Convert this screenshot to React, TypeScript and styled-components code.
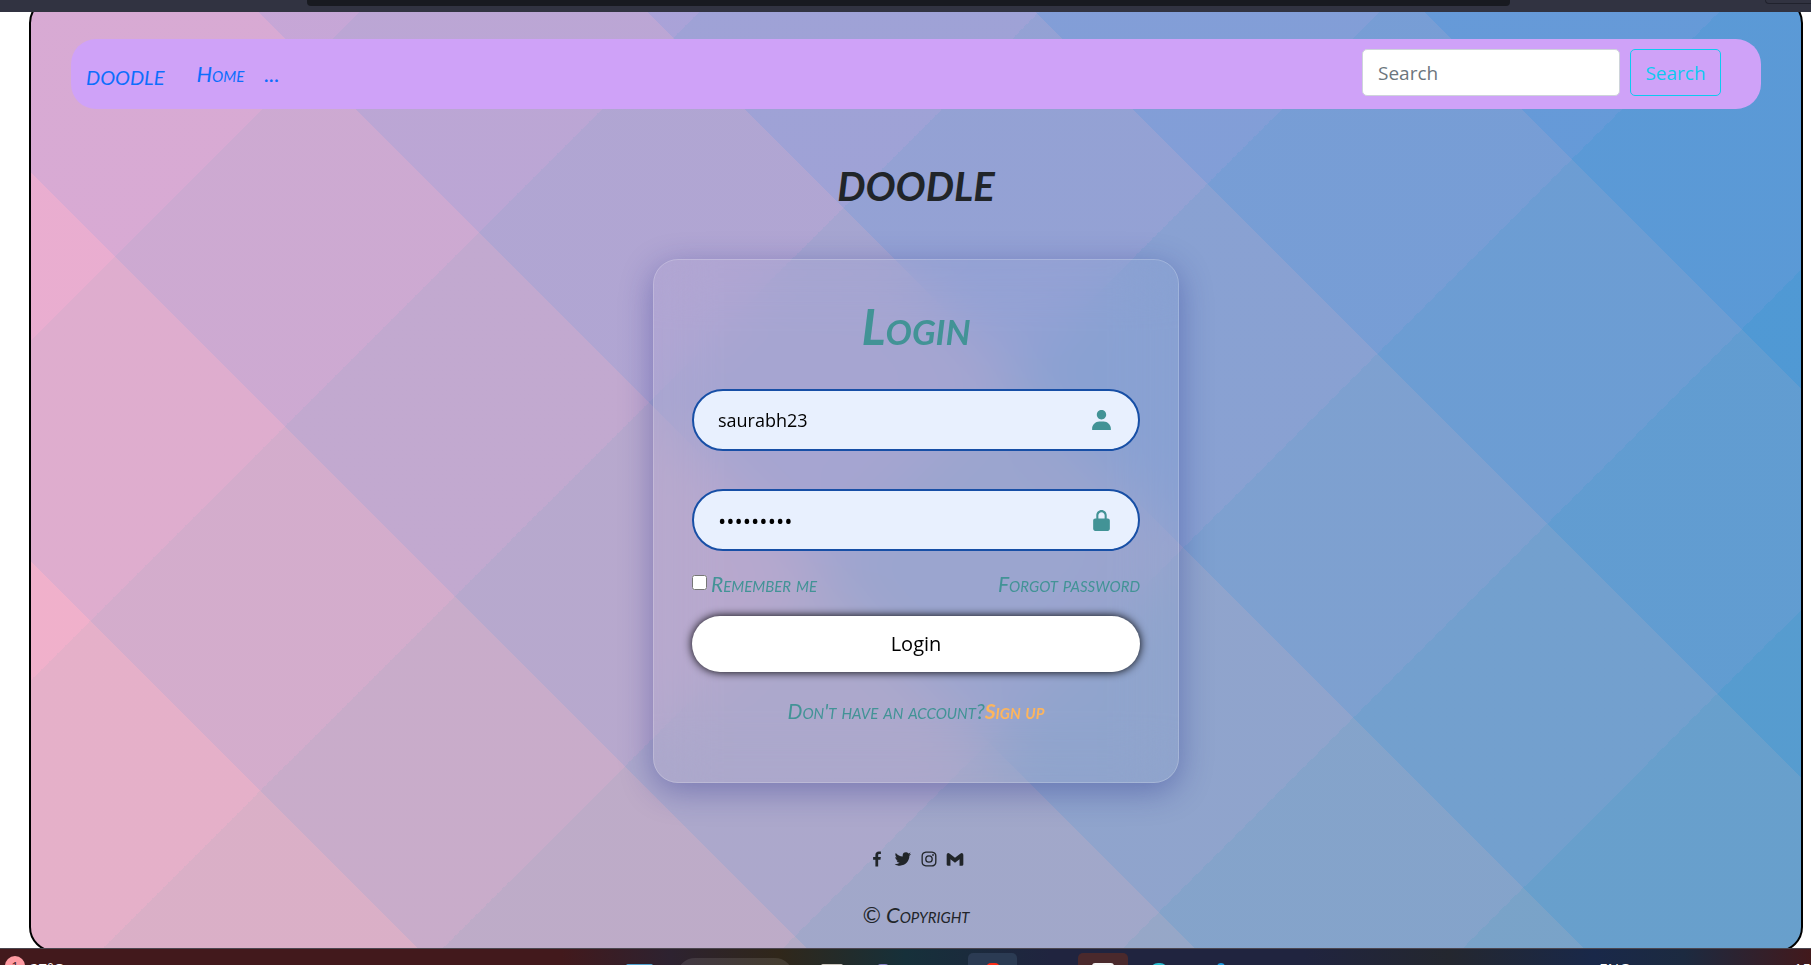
import React from "react";
import styled, { createGlobalStyle, css } from "styled-components";
import {
  BiSolidUser,
  BiSolidLockAlt,
  BiLogoFacebook,
  BiLogoTwitter,
  BiLogoInstagram,
  BiLogoGmail,
} from "react-icons/bi";

const uiFont = `"Open Sans", "Noto Sans", sans-serif`;
const capsFont = `Lato, "Open Sans", sans-serif`;
const teal = "#429396";

type Rgb = [number, number, number];

/* Builds hard-edged stripes of equal width, one colour step apart. */
const stripes = (angle: number, count: number, step: Rgb, alpha: number) => {
  const start: Rgb = [251, 177, 205];
  const stops = Array.from({ length: count }, (_, i) => {
    const rgb = start.map((v, k) => Math.round(v + step[k] * i)).join(", ");
    const from = ((i * 100) / count).toFixed(3);
    const to = (((i + 1) * 100) / count).toFixed(3);
    return `rgba(${rgb}, ${alpha}) ${from}% ${to}%`;
  });
  return `linear-gradient(${angle}deg, ${stops.join(", ")})`;
};

const risingStripes = stripes(45, 7, [-35, -7, 6.4], 0.5);
const fallingStripes = stripes(135, 8, [-22, -1, -4], 1);

const GlobalStyle = createGlobalStyle`
  *, *::before, *::after { box-sizing: border-box; }
  body {
    margin: 0;
    background: #fff;
    color: #212529;
    font: 20px/30px ${uiFont};
  }
  input, button { font: inherit; }
  a { text-decoration: none; }
`;

const smallCaps = css`
  font-family: ${capsFont};
  font-size: 21px;
  font-style: italic;
  font-variant: small-caps;
`;

const Screen = styled.div`
  display: grid;
  grid-template-rows: 12px minmax(0, 1fr) 17px;
  height: 100vh;
  overflow: hidden;
`;

const BrowserBar = styled.div`
  display: flex;
  justify-content: space-between;
  padding-left: 307px;
  background: #313341;
  overflow: hidden;
`;

const AddressBar = styled.div`
  flex: 1;
  height: 6px;
  margin-right: 255px;
  border-radius: 0 0 4px 4px;
  background: #181a20;
`;

const BarPill = styled.div`
  width: 46px;
  height: 4px;
  border: 1px solid #20222d;
  border-top: 0;
  border-right: 0;
  border-radius: 0 0 0 12px;
`;

const Viewport = styled.div`
  overflow: hidden;
`;

const Board = styled.div`
  display: flex;
  flex-direction: column;
  align-items: center;
  min-height: calc(100% + 17px);
  margin: -14px 8px 0 29px;
  padding: 39px 40px 20px;
  border: 2px solid #000;
  border-radius: 25px;
  background: ${risingStripes}, ${fallingStripes};
`;

const Navbar = styled.nav`
  display: flex;
  align-items: center;
  align-self: stretch;
  height: 70px;
  padding: 0 40px 0 15px;
  border-radius: 25px;
  background: #cfa2f8;
`;

const Brand = styled.a`
  ${smallCaps}
  margin-right: 32px;
  color: #0d6efd;
  font-size: 28px;
`;

const NavLink = styled.a`
  ${smallCaps}
  margin-right: 20px;
  color: #0d6efd;
  font-size: 22px;
`;

const SearchForm = styled.form`
  display: flex;
  gap: 10px;
  margin: 0 0 0 auto;
  padding-bottom: 3px;
  font-size: 19px;
`;

const SearchInput = styled.input`
  width: 258px;
  height: 47px;
  padding: 0 15px;
  border: 1px solid #ced4da;
  border-radius: 5px;
  background: #fff;
  outline: 0;
  &::placeholder { color: #6c757d; opacity: 1; }
`;

const SearchButton = styled.button`
  width: 91px;
  height: 47px;
  padding: 0;
  border: 1px solid #0dcaf0;
  border-radius: 5px;
  background: transparent;
  color: #0dcaf0;
`;

const Title = styled.h1`
  ${smallCaps}
  margin: 40px 0 0;
  font-size: 57px;
  font-weight: 700;
  line-height: 60px;
`;

const Card = styled.main`
  width: 526px;
  height: 524px;
  margin-top: 50px;
  padding: 36px 38px;
  border: 1px solid rgba(255, 255, 255, 0.2);
  border-radius: 25px;
  box-shadow: 0 8px 32px rgba(31, 38, 135, 0.37);
  backdrop-filter: blur(30px);
  color: ${teal};
`;

const CardTitle = styled.h2`
  ${smallCaps}
  margin: 0 0 33px;
  font-size: 50px;
  font-weight: 700;
  line-height: 60px;
  text-align: center;
`;

const Field = styled.label`
  display: flex;
  align-items: center;
  height: 62px;
  margin-bottom: 38px;
  padding: 0 24px;
  border: 2px solid #174fa6;
  border-radius: 31px;
  background: #e8f0fe;
`;

const FieldInput = styled.input`
  flex: 1;
  min-width: 0;
  padding: 0;
  border: 0;
  outline: 0;
  background: transparent;
  color: #000;
  font-size: ${(p) => (p.type === "password" ? 22 : 18)}px;
`;

const Options = styled.div`
  ${smallCaps}
  display: flex;
  justify-content: space-between;
  margin: -18px 0 19px;
  line-height: 26px;
`;

const Remember = styled.label`
  display: flex;
  align-items: center;
  gap: 4px;
`;

const Checkbox = styled.input`
  width: 15px;
  height: 15px;
  margin: 0 0 4px;
`;

const TealLink = styled.a`
  color: ${teal};
`;

const LoginButton = styled.button`
  display: block;
  width: 100%;
  height: 56px;
  border: 0;
  border-radius: 28px;
  background: #fff;
  box-shadow: 0 0 10px #000;
  color: #000;
  font-size: 20px;
  font-weight: 500;
`;

const SignUpLine = styled.p`
  ${smallCaps}
  margin: 24px 0 0;
  text-align: center;
`;

const SignUpLink = styled.a`
  color: #fdb55d;
  font-weight: 700;
`;

const Footer = styled.footer`
  display: flex;
  flex-direction: column;
  align-items: center;
  gap: 31px;
  margin-top: 66px;
`;

const Socials = styled.div`
  display: flex;
  gap: 6px;
  height: 20px;
`;

const SocialLink = styled.a`
  display: flex;
  color: #212529;
`;

const Copyright = styled.p`
  ${smallCaps}
  margin: 0;
  font-size: 22px;
`;

const Taskbar = styled.div`
  display: flex;
  align-items: flex-start;
  overflow: hidden;
  border-top: 1px solid #4b464f;
  background: linear-gradient(
    90deg,
    #42191c 0%,
    #42191c 31%,
    #2d2230 37%,
    #30271a 43%,
    #16303a 50%,
    #20243f 58%,
    #20243f 72%,
    #24272f 80%,
    #192849 88%,
    #1c2a40 93%,
    #42191c 100%
  );
  color: #fff;
  font-size: 15px;
  line-height: 20px;
`;

const Badge = styled.span`
  width: 20px;
  height: 20px;
  margin: 7px 5px 0;
  border-radius: 10px;
  background: #ff9ba2;
  color: #42191c;
  font-size: 13px;
  text-align: center;
`;

const TaskText = styled.span<{ $before?: string }>`
  margin: 9px 0 0 ${(p) => p.$before ?? "0"};
`;

const Tile = styled.span<{ $w: number; $top: number; $gap: number; $bg: string; $round?: number }>`
  display: flex;
  justify-content: center;
  flex: none;
  width: ${(p) => p.$w}px;
  height: 40px;
  margin: ${(p) => p.$top}px 0 0 ${(p) => p.$gap}px;
  border-radius: ${(p) => p.$round ?? 2}px;
  background: ${(p) => p.$bg};
`;

export default function App() {
  return (
    <>
      <GlobalStyle />
      <Screen>
        <BrowserBar>
          <AddressBar />
          <BarPill />
        </BrowserBar>
        <Viewport>
          <Board>
            <Navbar>
              <Brand href="#">doodle</Brand>
              <NavLink href="#">Home</NavLink>
              <NavLink href="#">...</NavLink>
              <SearchForm onSubmit={(e) => e.preventDefault()}>
                <SearchInput type="search" placeholder="Search" aria-label="Search" />
                <SearchButton type="submit">Search</SearchButton>
              </SearchForm>
            </Navbar>
            <Title>doodle</Title>
            <Card>
              <form onSubmit={(e) => e.preventDefault()}>
                <CardTitle>Login</CardTitle>
                <Field>
                  <FieldInput type="text" aria-label="Username" defaultValue="saurabh23" />
                  <BiSolidUser size={25} />
                </Field>
                <Field>
                  <FieldInput type="password" aria-label="Password" defaultValue="saurabh23" />
                  <BiSolidLockAlt size={25} />
                </Field>
                <Options>
                  <Remember>
                    <Checkbox type="checkbox" />
                    Remember me
                  </Remember>
                  <TealLink href="#">Forgot password</TealLink>
                </Options>
                <LoginButton type="submit">Login</LoginButton>
                <SignUpLine>
                  Don't have an account?<SignUpLink href="#">Sign up</SignUpLink>
                </SignUpLine>
              </form>
            </Card>
            <Footer>
              <Socials>
                <SocialLink href="#" aria-label="Facebook"><BiLogoFacebook size={20} /></SocialLink>
                <SocialLink href="#" aria-label="Twitter"><BiLogoTwitter size={20} /></SocialLink>
                <SocialLink href="#" aria-label="Instagram"><BiLogoInstagram size={20} /></SocialLink>
                <SocialLink href="#" aria-label="Gmail"><BiLogoGmail size={20} /></SocialLink>
              </Socials>
              <Copyright>© Copyright</Copyright>
            </Footer>
          </Board>
        </Viewport>
        <Taskbar>
          <Badge>1</Badge>
          <TaskText>27°C</TaskText>
          <Tile $w={27} $top={15} $gap={563} $bg="#4fa3d1" />
          <Tile $w={116} $top={9} $gap={24} $bg="rgba(255, 255, 255, 0.1)" $round={18} />
          <Tile $w={22} $top={15} $gap={28} $bg="#c9c4bd" />
          <Tile $w={12} $top={15} $gap={34} $bg="#8a84c8" $round={4} />
          <Tile $w={49} $top={4} $gap={79} $bg="#2b3b53" $round={5}>
            <Tile $w={14} $top={10} $gap={0} $bg="#fb2c16" $round={5} />
          </Tile>
          <Tile $w={50} $top={4} $gap={61} $bg="#4a292c" $round={5}>
            <Tile $w={22} $top={10} $gap={0} $bg="#f6f6f6" $round={3} />
          </Tile>
          <Tile $w={18} $top={14} $gap={22} $bg="#2bbdd0" $round={8} />
          <Tile $w={8} $top={14} $gap={49} $bg="#1d9be0" $round={4} />
          <TaskText $before="auto">ENG</TaskText>
          <TaskText $before="164px">15</TaskText>
        </Taskbar>
      </Screen>
    </>
  );
}
